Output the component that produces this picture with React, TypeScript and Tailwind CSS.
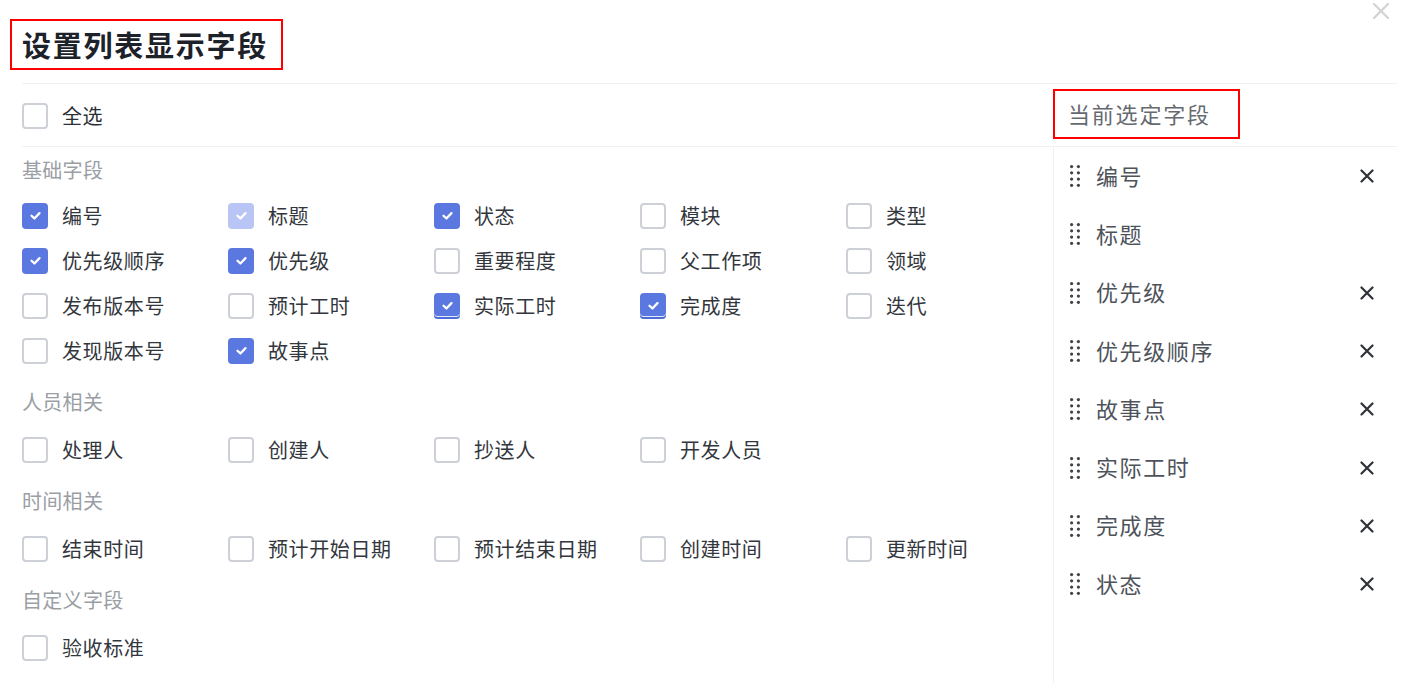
import { Fragment } from 'react'

type Field = { label: string; checked?: boolean; disabled?: boolean; accent?: boolean }

const sections: { title: string; fields: Field[] }[] = [
  {
    title: '基础字段',
    fields: [
      { label: '编号', checked: true },
      { label: '标题', checked: true, disabled: true },
      { label: '状态', checked: true },
      { label: '模块' },
      { label: '类型' },
      { label: '优先级顺序', checked: true },
      { label: '优先级', checked: true },
      { label: '重要程度' },
      { label: '父工作项' },
      { label: '领域' },
      { label: '发布版本号' },
      { label: '预计工时' },
      { label: '实际工时', checked: true, accent: true },
      { label: '完成度', checked: true, accent: true },
      { label: '迭代' },
      { label: '发现版本号' },
      { label: '故事点', checked: true },
    ],
  },
  {
    title: '人员相关',
    fields: [{ label: '处理人' }, { label: '创建人' }, { label: '抄送人' }, { label: '开发人员' }],
  },
  {
    title: '时间相关',
    fields: [
      { label: '结束时间' },
      { label: '预计开始日期' },
      { label: '预计结束日期' },
      { label: '创建时间' },
      { label: '更新时间' },
    ],
  },
  {
    title: '自定义字段',
    fields: [{ label: '验收标准' }],
  },
]

const selected: { label: string; fixed?: boolean }[] = [
  { label: '编号' },
  { label: '标题', fixed: true },
  { label: '优先级' },
  { label: '优先级顺序' },
  { label: '故事点' },
  { label: '实际工时' },
  { label: '完成度' },
  { label: '状态' },
]

function Checkbox({ checked, disabled, accent }: Omit<Field, 'label'>) {
  if (!checked) {
    return <span className="w-[26px] h-[26px] rounded-[4px] border-2 border-[#cdd0d6] bg-white flex-shrink-0" />
  }
  return (
    <span
      className={`w-[26px] h-[26px] rounded-[4px] flex items-center justify-center flex-shrink-0 ${
        disabled ? 'bg-[#b9c6f5]' : 'bg-[#5a78e0]'
      } ${accent ? 'shadow-[inset_0_-2px_0_0_#4f6bd6,inset_0_-3px_0_0_#e4e9fb]' : ''}`}
    >
      <svg viewBox="0 0 12 12" className="w-[13px] h-[13px]" fill="none" stroke="#fff" strokeWidth={2.1} strokeLinecap="round" strokeLinejoin="round">
        <path d="M2.3 6.2 5 8.7 9.7 3.8" />
      </svg>
    </span>
  )
}

function DragHandle() {
  return (
    <svg viewBox="0 0 10 22" className="w-[10px] h-[22px] flex-shrink-0" fill="#3e434a">
      {[0, 1, 2, 3].map((r) => (
        <Fragment key={r}>
          <circle cx="1.6" cy={1.6 + r * 6.25} r="1.6" />
          <circle cx="8.4" cy={1.6 + r * 6.25} r="1.6" />
        </Fragment>
      ))}
    </svg>
  )
}

export default function App() {
  return (
    <div
      className="relative w-[1404px] h-[683px] bg-white overflow-hidden text-[#2b2f36]"
      style={{ fontFamily: '"Noto Sans CJK SC", "Noto Sans", sans-serif' }}
    >
      {/* Close */}
      <button className="absolute top-[2px] right-[14px] w-[18px] h-[18px]">
        <svg viewBox="0 0 18 18" className="w-[18px] h-[18px]" fill="none" stroke="#d4d4d4" strokeWidth={2.4} strokeLinecap="round">
          <path d="M2 2 16 16M16 2 2 16" />
        </svg>
      </button>

      {/* Header */}
      <div className="h-[83px] pt-[19px] pl-[10px]">
        <div className="inline-flex items-center h-[51px] pl-[10px] pr-[13px] border-2 border-[#ff0000]">
          <h1 className="text-[29px] leading-none font-bold tracking-[1.75px] text-[#1d2129]">设置列表显示字段</h1>
        </div>
      </div>

      <div className="ml-[22px] mr-[7px]">
        {/* Band 1 */}
        <div className="flex h-[63px] border-t border-[#f0f1f3]">
          <label className="w-[1031px] flex items-center gap-[14px] pt-[2px]">
            <Checkbox />
            <span className="text-[20px] leading-none tracking-[0.6px]">全选</span>
          </label>
          <div className="flex-1">
            <div className="mt-[5px] w-[187px] h-[50px] border-2 border-[#ff0000] flex items-center pl-[13px]">
              <span className="mb-[3px] text-[22px] leading-none tracking-[1.8px] text-[#666a70]">当前选定字段</span>
            </div>
          </div>
        </div>

        {/* Band 2 */}
        <div className="flex h-[537px] border-t border-[#f0f1f3]">
          <div className="w-[1031px] flex flex-col gap-[3px]">
            {sections.map((s, i) => (
              <div key={s.title}>
                <div className={`${i === 0 ? 'h-[46px]' : 'h-[51px]'} flex items-center`}>
                  <span className="text-[20px] leading-none tracking-[0.3px] text-[#9a9ea5]">{s.title}</span>
                </div>
                <div className="grid grid-cols-[repeat(5,206px)]">
                  {s.fields.map((f) => (
                    <label key={f.label} className="h-[45px] flex items-center gap-[14px]">
                      <Checkbox checked={f.checked} disabled={f.disabled} accent={f.accent} />
                      <span className="text-[20px] leading-none tracking-[0.6px] text-[#33373d]">{f.label}</span>
                    </label>
                  ))}
                </div>
              </div>
            ))}
          </div>

          <div className="flex-1 border-l border-[#f0f1f3] flex flex-col">
            {selected.map((it) => (
              <div key={it.label} className="h-[58.3px] flex items-center pl-[16px] pr-[23px]">
                <DragHandle />
                <span className="ml-[16px] mb-[3px] flex-1 text-[22px] leading-none tracking-[1.6px] text-[#4e535b]">{it.label}</span>
                {!it.fixed && (
                  <svg viewBox="0 0 14 14" className="w-[14px] h-[14px]" fill="none" stroke="#2f3339" strokeWidth={2.2} strokeLinecap="round">
                    <path d="M1.5 1.5 12.5 12.5M12.5 1.5 1.5 12.5" />
                  </svg>
                )}
              </div>
            ))}
          </div>
        </div>
      </div>
    </div>
  )
}
